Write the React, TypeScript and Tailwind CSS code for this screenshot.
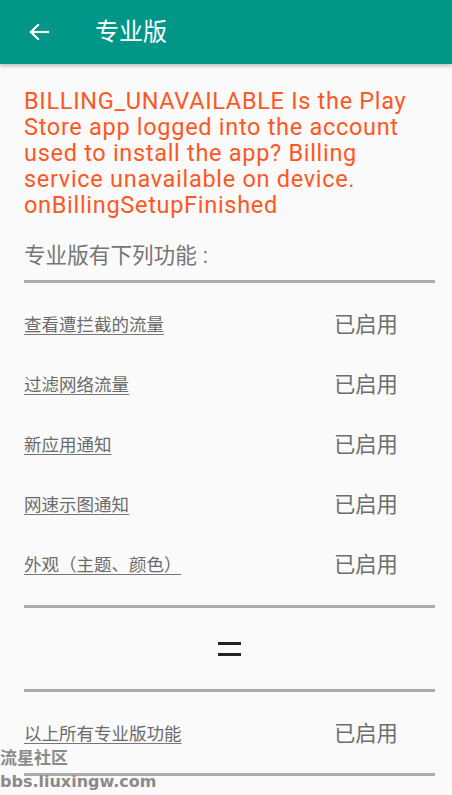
import React from "react";

const cjk = { fontFamily: 'Roboto, "Noto Sans CJK SC", sans-serif' };

function Row({ label }: { label: string }) {
  return (
    <div className="flex h-[60px] items-center">
      <div className="flex-1 text-[17.5px] text-[#6b6b6b] underline decoration-[#777] underline-offset-[3px]">{label}</div>
      <div className="w-[101px] text-[21.3px] text-[#6e6e6e]">已启用</div>
    </div>
  );
}

function Divider({ className = "" }: { className?: string }) {
  return <div className={`h-[3px] bg-[#ababab] ${className}`} />;
}

export default function App() {
  const items = ["查看遭拦截的流量", "过滤网络流量", "新应用通知", "网速示图通知", "外观（主题、颜色）"];
  return (
    <div className="relative h-[795px] w-[452px] overflow-hidden bg-[#fafafa]" style={cjk}>
      <div className="relative z-10 flex h-[64px] items-center bg-[#009688] shadow-[0_2px_4px_rgba(0,0,0,0.25)]">
        <svg className="ml-[27px]" width="24" height="24" viewBox="0 0 24 24" fill="none" stroke="white" strokeWidth="2.2" strokeLinecap="square">
          <path d="M21 12H4" />
          <path d="M11 5l-7 7 7 7" />
        </svg>
        <div className="ml-[44px] text-[24px] text-white">专业版</div>
      </div>
      <div className="pl-[24px] pr-[17px]">
        <div className="pt-[24px] text-[23.5px] leading-[26px] tracking-[0.7px] text-[#ff5722]" style={{ fontFamily: "Roboto, sans-serif" }}>
          BILLING_UNAVAILABLE Is the Play Store app logged into the account used to install the app? Billing service unavailable on device. onBillingSetupFinished
        </div>
        <div className="mt-[23px] text-[21.6px] leading-[30px] text-[#757575]">专业版有下列功能<span className="ml-[6px]">:</span></div>
        <Divider className="mt-[9px]" />
        <div className="mt-[12px]">
          {items.map((it) => (
            <Row key={it} label={it} />
          ))}
        </div>
        <Divider className="mt-[10px]" />
        <div className="flex h-[81px] items-center justify-center">
          <div className="flex flex-col gap-[8px]">
            <div className="h-[3px] w-[23px] bg-[#222]" />
            <div className="h-[3px] w-[23px] bg-[#222]" />
          </div>
        </div>
        <Divider />
        <div className="mt-[12px]">
          <Row label="以上所有专业版功能" />
        </div>
        <Divider className="mt-[9px]" />
      </div>
      <div className="absolute left-0 top-[747px] text-[17px] font-bold leading-[22px] text-[#8a8a8a]" style={{ fontFamily: '"DejaVu Sans", "Noto Sans CJK SC", sans-serif' }}>
        <div>流星社区</div>
        <div className="mt-[2px] text-[16px]">bbs.liuxingw.com</div>
      </div>
    </div>
  );
}
